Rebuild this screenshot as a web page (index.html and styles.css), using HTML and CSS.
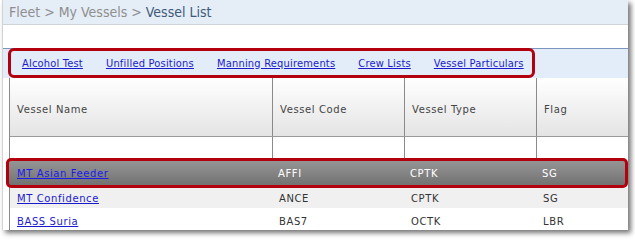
FILE: index.html
```html
<!DOCTYPE html>
<html>
<head>
<meta charset="utf-8">
<link rel="stylesheet" href="styles.css">
</head>
<body>
<div class="panel">
  <div class="crumb"><span class="crumb-muted">Fleet &gt; My Vessels &gt; </span><span class="crumb-cur">Vessel List</span></div>
  <div class="spacer"></div>
  <div class="tabbar">
    <div class="tabbox">
      <a href="#">Alcohol Test</a>
      <a href="#">Unfilled Positions</a>
      <a href="#">Manning Requirements</a>
      <a href="#">Crew Lists</a>
      <a href="#">Vessel Particulars</a>
    </div>
  </div>
  <div class="grid">
    <div class="row head">
      <div class="cell">Vessel Name</div>
      <div class="cell">Vessel Code</div>
      <div class="cell">Vessel Type</div>
      <div class="cell">Flag</div>
    </div>
    <div class="row filter">
      <div class="cell"></div>
      <div class="cell"></div>
      <div class="cell"></div>
      <div class="cell"></div>
    </div>
    <div class="row sel">
      <div class="cell"><a href="#">MT Asian Feeder</a></div>
      <div class="cell">AFFI</div>
      <div class="cell">CPTK</div>
      <div class="cell">SG</div>
    </div>
    <div class="row alt">
      <div class="cell"><a href="#">MT Confidence</a></div>
      <div class="cell">ANCE</div>
      <div class="cell">CPTK</div>
      <div class="cell">SG</div>
    </div>
    <div class="row last">
      <div class="cell"><a href="#">BASS Suria</a></div>
      <div class="cell">BAS7</div>
      <div class="cell">OCTK</div>
      <div class="cell">LBR</div>
    </div>
  </div>
</div>
</body>
</html>
```
FILE: styles.css
```css
html, body {
  margin: 0;
  padding: 0;
  background: #ffffff;
}
body {
  width: 635px;
  height: 240px;
  overflow: hidden;
  font-family: "DejaVu Sans", Verdana, sans-serif;
}
.panel {
  width: 625px;
  height: 230px;
  margin-left: 2px;
  border-left: 1px solid #d4d4d4;
  background: #ffffff;
  box-shadow: 3px 3px 5px rgba(0, 0, 0, 0.55);
  display: flex;
  flex-direction: column;
  overflow: hidden;
}
.crumb {
  height: 24px;
  margin-left: -3px;
  padding-left: 9px;
  background: #e5edf7;
  border-bottom: 1px solid #cfd4da;
  font-size: 14px;
  line-height: 24px;
  font-family: "DejaVu Sans Condensed", "DejaVu Sans", sans-serif;
  white-space: nowrap;
}
.crumb-muted { color: #8e8e8e; }
.crumb-cur { color: #3d5a78; }
.spacer { height: 24px; }
.tabbar {
  height: 29px;
  background: #e3edf9;
  border-top: 1px solid #7b95bf;
  display: flex;
}
.tabbox {
  box-sizing: border-box;
  margin-left: 5px;
  margin-top: -1px;
  width: 527px;
  height: 30px;
  border: 3px solid #b3000f;
  border-radius: 6px;
  display: flex;
  align-items: center;
  gap: 23px;
  padding-left: 11px;
  font-family: "DejaVu Sans Condensed", "DejaVu Sans", sans-serif;
  font-size: 11px;
  letter-spacing: 0.2px;
}
.tabbox a {
  color: #1a1acc;
  text-decoration: underline;
  white-space: nowrap;
}
.grid {
  margin-left: 6px;
  border-left: 1px solid #8a8a8a;
  display: flex;
  flex-direction: column;
  font-size: 10px;
  letter-spacing: 0.6px;
  color: #333333;
}
.row {
  display: grid;
  grid-template-columns: 262px 132px 132px 1fr;
}
.cell {
  padding-left: 7px;
  display: flex;
  align-items: center;
  white-space: nowrap;
}
.cell + .cell { border-left: 1px solid #8a8a8a; }
.row.head {
  height: 58px;
  background: linear-gradient(#ffffff, #e4e4e4);
  border-bottom: 1px solid #9a9a9a;
  color: #444444;
}
.row.head .cell { padding-top: 5px; }
.row.filter { height: 21px; background: #ffffff; }
.row.sel {
  height: 24px;
  margin-left: -4px;
  border: 3px solid #b3000f;
  border-radius: 5px;
  background: linear-gradient(#959595, #727272);
  color: #ffffff;
}
.row.sel .cell { border-left: none; }
.row.sel .cell:first-child { padding-left: 8px; }
.row.sel .cell:nth-child(2) { padding-left: 7px; }
.row.alt { height: 20px; background: #f0f0f0; }
.row.alt .cell { padding-top: 1px; }
.row.last { height: 22px; background: #ffffff; }
.row.last .cell { padding-top: 5px; }
.row.alt .cell, .row.last .cell { border-left: none; }
.row.alt .cell:first-child, .row.last .cell:first-child { padding-left: 7px; }
.grid a { color: #1a1acc; text-decoration: underline; }
.row.sel a { color: #1a1aee; }
```
